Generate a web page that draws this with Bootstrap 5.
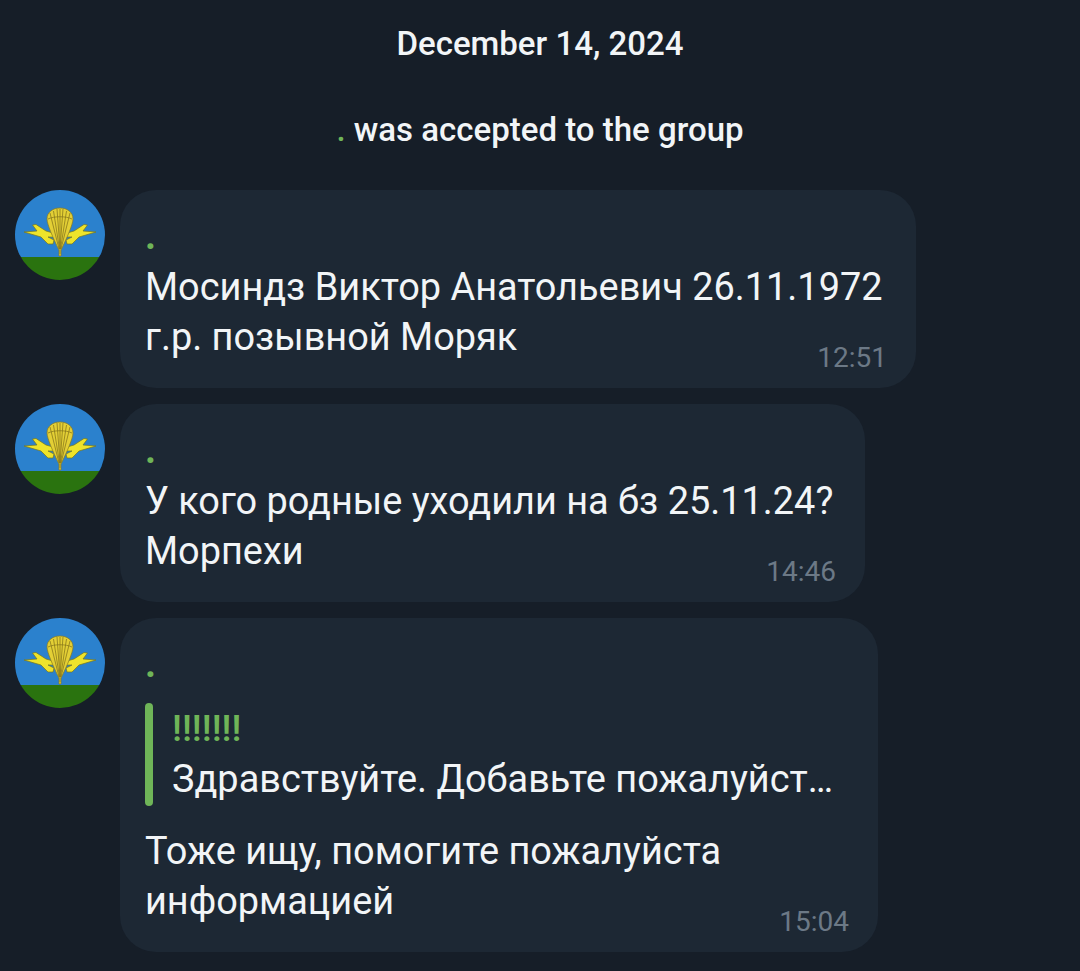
<!DOCTYPE html>
<html lang="en">
<head>
    <meta charset="UTF-8">
    <meta name="viewport" content="width=device-width, initial-scale=1.0">
    <title>Group chat</title>
    <link href="https://cdn.jsdelivr.net/npm/bootstrap@5.3.0/dist/css/bootstrap.min.css" rel="stylesheet">
    <style>
        body {
            background-color: #161e28;
            color: #f2f5f7;
            font-family: Roboto, "Liberation Sans", sans-serif;
            height: 971px;
            overflow: hidden;
        }
        .chat-date {
            font-size: 33px;
            font-weight: 500;
            line-height: 40px;
            padding-top: 24px;
        }
        .chat-service {
            font-size: 33px;
            font-weight: 500;
            line-height: 40px;
            margin-top: 46px;
            margin-bottom: 40px;
        }
        .sender-dot { color: #6fb558; }
        .chat-list { padding-left: 15px; gap: 16px; }
        .avatar-pic { width: 90px; height: 90px; flex: none; }
        .bubble {
            position: relative;
            background-color: #1d2834;
            border-radius: 36px;
            margin-left: 15px;
            padding: 22px 25px 26px;
            font-size: 37.900px;
            line-height: 50px;
        }
        .bubble-a { width: 796px; }
        .bubble-b { width: 745px; }
        .bubble-c { width: 758px; }
        .sender-name {
            color: #6fb558;
            font-size: 38px;
            line-height: 48px;
            height: 50px;
            font-weight: 700;
        }
        .msg-time {
            position: absolute;
            right: 29px;
            bottom: 14px;
            color: #6c7986;
            font-size: 28px;
            line-height: 32px;
        }
        .quote-box {
            margin-top: 13px;
            margin-bottom: 20px;
            height: 103px;
            gap: 19px;
        }
        .quote-bar {
            width: 8px;
            flex: none;
            background-color: #6fb558;
            border-radius: 4px;
        }
        .quote-title {
            color: #6fb558;
            font-size: 37.500px;
            line-height: 51px;
            height: 51px;
            font-weight: 500;
        }
        .quote-text { line-height: 50px; white-space: nowrap; }
    </style>
</head>
<body>
    <div class="text-center chat-date">December 14, 2024</div>
    <div class="text-center chat-service"><span class="sender-dot">.</span> was accepted to the group</div>

    <div class="d-flex flex-column chat-list">
        <div class="d-flex align-items-start">
            <svg class="avatar-pic" viewBox="0 0 90 90"><use href="#vdv"/></svg>
            <div class="bubble bubble-a">
                <div class="sender-name">.</div>
                Мосиндз Виктор Анатольевич 26.11.1972<br>г.р. позывной Моряк
                <span class="msg-time">12:51</span>
            </div>
        </div>
        <div class="d-flex align-items-start">
            <svg class="avatar-pic" viewBox="0 0 90 90"><use href="#vdv"/></svg>
            <div class="bubble bubble-b">
                <div class="sender-name">.</div>
                У кого родные уходили на бз 25.11.24?<br>Морпехи
                <span class="msg-time">14:46</span>
            </div>
        </div>
        <div class="d-flex align-items-start">
            <svg class="avatar-pic" viewBox="0 0 90 90"><use href="#vdv"/></svg>
            <div class="bubble bubble-c">
                <div class="sender-name">.</div>
                <div class="d-flex quote-box">
                    <div class="quote-bar"></div>
                    <div>
                        <div class="quote-title">!!!!!!!</div>
                        <div class="quote-text">Здравствуйте. Добавьте пожалуйст…</div>
                    </div>
                </div>
                Тоже ищу, помогите пожалуйста<br>информацией
                <span class="msg-time">15:04</span>
            </div>
        </div>
    </div>

    <!-- avatar emblem, reused by the three messages -->
    <svg width="0" height="0" class="position-absolute">
        <defs>
            <clipPath id="avatarClip"><circle cx="45" cy="45" r="45"/></clipPath>
            <g id="vdv">
                <g clip-path="url(#avatarClip)">
                    <rect width="90" height="67" fill="#2b81cd"/>
                    <rect y="67" width="90" height="23" fill="#2a730f"/>
                </g>
                <path d="M9 42 L22 41 L17.500 35 L21 34.500 L31 41 L38 43 L39 47 L33 47 L39 50 L38 54 L33 54 L26 47 Z" fill="#eee32b" stroke="#77761d" stroke-width=".7"/>
                <path d="M81 42 L68 41 L72.500 35 L69 34.500 L59 41 L52 43 L51 47 L57 47 L51 50 L52 54 L57 54 L64 47 Z" fill="#eee32b" stroke="#77761d" stroke-width=".7"/>
                <path d="M32 29 C32 22 38 18 45 18 C52 18 58 22 58 29 C58 34 52 48 46 60 L46 66 L44 66 L44 60 C38 48 32 34 32 29 Z" fill="#e3cf35" stroke="#8a7a1c" stroke-width=".7"/>
                <path d="M35 23 L44 59 M38.500 21 L44.500 59 M42 19 L45 59 M45 19 L45 64 M48 19 L45 59 M51.500 21 L45.500 59 M55 23 L46 59 M33 29 C39 26 51 26 57 29" stroke="#8a7a1c" stroke-width=".8" fill="none"/>
            </g>
        </defs>
    </svg>

    <script src="https://cdn.jsdelivr.net/npm/bootstrap@5.3.0/dist/js/bootstrap.bundle.min.js"></script>
</body>
</html>
